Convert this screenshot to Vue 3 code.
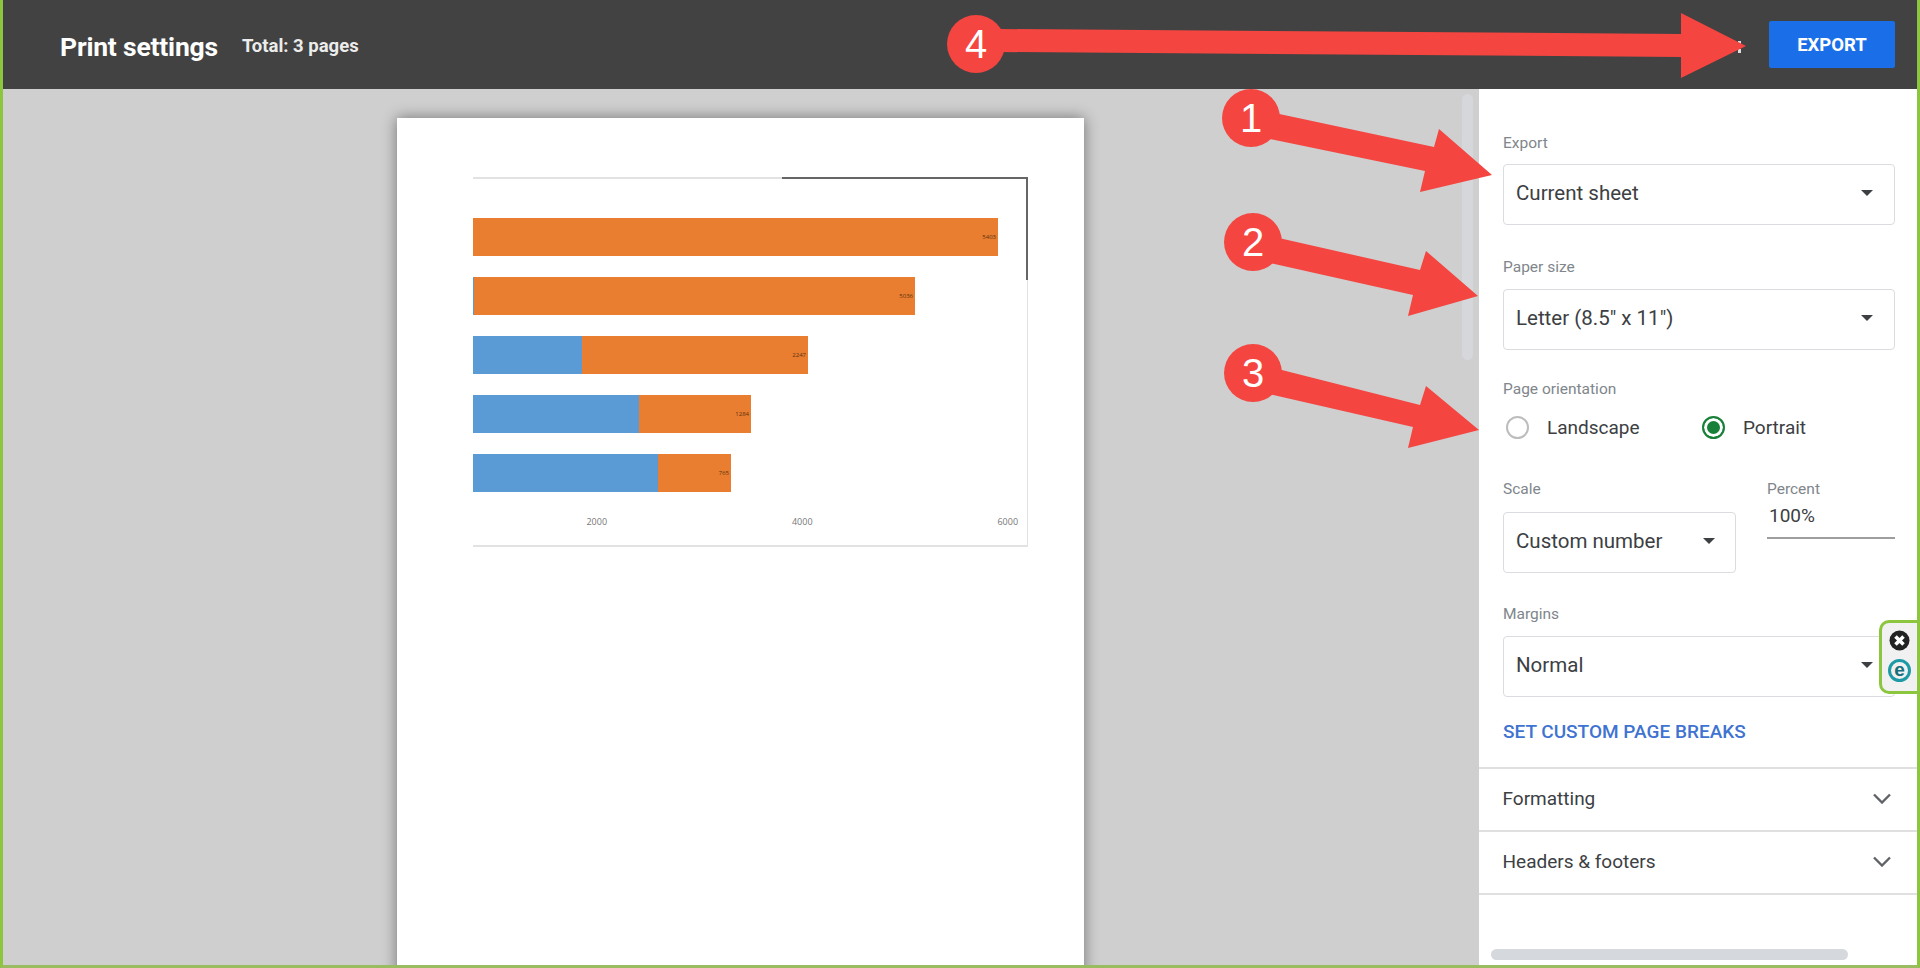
<template>
  <div class="page">
    <!-- 상단 바 -->
    <header class="topbar">
      <h1 class="title">Print settings</h1>
      <span class="total">Total: 3 pages</span>
      <span class="menu-dot"></span>
      <button class="export-btn">EXPORT</button>
    </header>

    <div class="main">
      <!-- 미리보기 -->
      <section class="preview">
        <div class="paper">
          <div class="chart">
            <div class="chart-line-top"></div>
            <div class="chart-line-right"></div>
            <div class="bars">
              <div v-for="bar in bars" :key="bar.label" class="bar">
                <div class="bar-blue" :style="{ width: bar.blue + 'px' }"></div>
                <div class="bar-orange" :style="{ width: bar.orange + 'px' }">
                  <span class="bar-label">{{ bar.label }}</span>
                </div>
              </div>
            </div>
            <div class="axis">
              <span v-for="tick in ticks" :key="tick">{{ tick }}</span>
            </div>
          </div>
        </div>
        <div class="preview-scroll"></div>
      </section>

      <!-- 오른쪽 설정 -->
      <aside class="sidebar">
        <div class="settings">
          <label class="field-label first">Export</label>
          <div class="select">
            <span>Current sheet</span>
            <svg class="caret" width="12" height="6" viewBox="0 0 12 6"><path d="M0 0h12L6 6z" /></svg>
          </div>

          <label class="field-label paper-label">Paper size</label>
          <div class="select">
            <span>Letter (8.5" x 11")</span>
            <svg class="caret" width="12" height="6" viewBox="0 0 12 6"><path d="M0 0h12L6 6z" /></svg>
          </div>

          <label class="field-label orient-label">Page orientation</label>
          <div class="radio-group">
            <div class="radio-item landscape">
              <span class="radio"></span>
              <span>Landscape</span>
            </div>
            <div class="radio-item">
              <span class="radio checked"></span>
              <span>Portrait</span>
            </div>
          </div>

          <div class="scale-row">
            <div class="scale-col">
              <label class="field-label">Scale</label>
              <div class="select">
                <span>Custom number</span>
                <svg class="caret" width="12" height="6" viewBox="0 0 12 6"><path d="M0 0h12L6 6z" /></svg>
              </div>
            </div>
            <div class="percent-col">
              <label class="field-label">Percent</label>
              <div class="percent-input">100%</div>
            </div>
          </div>

          <label class="field-label margin-label">Margins</label>
          <div class="select">
            <span>Normal</span>
            <svg class="caret" width="12" height="6" viewBox="0 0 12 6"><path d="M0 0h12L6 6z" /></svg>
          </div>

          <a class="breaks-link">SET CUSTOM PAGE BREAKS</a>
        </div>

        <div v-for="name in sections" :key="name" class="section-row">
          <span>{{ name }}</span>
          <svg width="18" height="11" viewBox="0 0 18 11" fill="none" stroke="#5f6368" stroke-width="2.4">
            <path d="M1 1.5l8 8 8-8" />
          </svg>
        </div>

        <div class="side-scroll"></div>

        <!-- 확장 프로그램 위젯 -->
        <div class="ext-widget">
          <svg width="21" height="21" viewBox="0 0 21 21">
            <circle cx="10.5" cy="10.5" r="10" fill="#222" />
            <path d="M6.5 6.5l8 8M14.5 6.5l-8 8" stroke="#fff" stroke-width="3.6" />
          </svg>
          <span class="ext-e">e</span>
        </div>
      </aside>
    </div>

    <!-- 빨간 화살표 주석 -->
    <svg class="notes" width="1920" height="968" viewBox="0 0 1920 968">
      <g v-for="note in notes" :key="note.num">
        <polygon :points="note.shape" fill="#f44540" />
        <circle :cx="note.x" :cy="note.y" r="29" fill="#f44540" />
        <text :x="note.x" :y="note.y + 14" class="note-num" text-anchor="middle">{{ note.num }}</text>
      </g>
    </svg>
  </div>
</template>

<script setup>
// 차트 막대 데이터 (px)
const bars = [
  { blue: 0, orange: 525, label: '5403' },
  { blue: 1, orange: 441, label: '5036' },
  { blue: 109, orange: 226, label: '2247' },
  { blue: 166, orange: 112, label: '1284' },
  { blue: 185, orange: 73, label: '765' },
];
const ticks = ['2000', '4000', '6000'];
const sections = ['Formatting', 'Headers & footers'];

// 주석 번호 + 화살표 모양
const notes = [
  {
    num: 1,
    x: 1251,
    y: 118,
    shape: '1270,112 1434,147 1439,129 1492,175 1420,192 1425,171 1265,138',
  },
  {
    num: 2,
    x: 1253,
    y: 242,
    shape: '1270,236 1420,270 1426,251 1478,296 1408,316 1413,295 1265,262',
  },
  {
    num: 3,
    x: 1253,
    y: 373,
    shape: '1270,367 1420,405 1426,386 1479,430 1408,448 1413,427 1265,393',
  },
  {
    num: 4,
    x: 976,
    y: 44,
    shape: '1000,29 1681,34 1681,13 1746,46 1681,78 1681,57 1000,52',
  },
];
</script>

<style>
html,
body {
  margin: 0;
  background: #cfcfcf;
}
</style>

<style scoped>
.page {
  position: relative;
  box-sizing: border-box;
  width: 1920px;
  height: 968px;
  overflow: hidden;
  display: flex;
  flex-direction: column;
  border-left: 3px solid #8cc63f;
  border-right: 3px solid #8cc63f;
  border-bottom: 3px solid #98bc5f;
  font-family: Roboto, "Liberation Sans", sans-serif;
  color: #3c4043;
}

/* 상단 바 */
.topbar {
  flex: none;
  box-sizing: border-box;
  height: 89px;
  display: flex;
  align-items: center;
  padding: 3px 22px 0 57px;
  background: #424242;
  color: #fff;
}
.title {
  margin: 0;
  font-size: 26.5px;
  font-weight: 700;
  letter-spacing: -0.2px;
}
.total {
  margin-left: 24px;
  font-size: 18.5px;
  font-weight: 700;
  color: #ececec;
}
.menu-dot {
  margin-left: auto;
  width: 0;
  height: 12px;
  margin-top: 1px;
  border-left: 3px dotted #ddd;
}
.export-btn {
  margin-left: 28px;
  margin-top: -3px;
  width: 126px;
  height: 47px;
  border: none;
  border-radius: 2px;
  background: #1a6fe8;
  color: #fff;
  font-family: inherit;
  font-size: 18.5px;
  font-weight: 700;
}

.main {
  flex: 1;
  min-height: 0;
  display: flex;
}

/* 미리보기 */
.preview {
  position: relative;
  flex: 1;
  background: #cfcfcf;
  overflow: hidden;
}
.preview-scroll {
  position: absolute;
  top: 5px;
  right: 6px;
  width: 11px;
  height: 266px;
  border-radius: 6px;
  background: #d6d7db;
}
.paper {
  box-sizing: border-box;
  width: 687px;
  height: 900px;
  margin: 29px 0 0 394px;
  padding-top: 59px;
  padding-left: 76px;
  background: #fff;
  box-shadow: 0 0 14px rgba(0, 0, 0, 0.45);
}
.chart {
  position: relative;
  box-sizing: border-box;
  width: 555px;
  height: 370px;
  padding-top: 39px;
  border-top: 2px solid #e2e2e2;
  border-right: 1px solid #e2e2e2;
  border-bottom: 2px solid #e2e2e2;
}
.chart-line-top {
  position: absolute;
  top: -2px;
  right: -1px;
  width: 246px;
  height: 2px;
  background: #666;
}
.chart-line-right {
  position: absolute;
  top: -2px;
  right: -1px;
  width: 2px;
  height: 103px;
  background: #666;
}
.bars {
  display: flex;
  flex-direction: column;
  gap: 21px;
}
.bar {
  display: flex;
  height: 38px;
}
.bar-blue {
  background: #5b9bd5;
}
.bar-orange {
  display: flex;
  align-items: center;
  justify-content: flex-end;
  padding-right: 2px;
  box-sizing: border-box;
  background: #e97e30;
}
.bar-label {
  font-family: "Open Sans", sans-serif;
  font-size: 6px;
  color: #5b3212;
}
.axis {
  display: flex;
  margin-top: 23px;
  margin-left: 21px;
  font-family: "Open Sans", sans-serif;
  font-size: 9px;
  color: #777;
}
.axis span {
  flex: none;
  width: 205.5px;
  text-align: center;
}

/* 오른쪽 설정 */
.sidebar {
  position: relative;
  flex: none;
  width: 438px;
  background: #fff;
}
.settings {
  box-sizing: border-box;
  height: 678px;
  padding: 44px 22px 0 24px;
}
.field-label {
  display: block;
  height: 20px;
  line-height: 20px;
  margin-bottom: 11px;
  font-size: 15.5px;
  color: #80868b;
}
.paper-label {
  margin-top: 32px;
  margin-bottom: 12px;
}
.orient-label {
  margin-top: 29px;
  margin-bottom: 0;
}
.margin-label {
  margin-top: 31px;
  margin-bottom: 12px;
}
.select {
  box-sizing: border-box;
  height: 61px;
  display: flex;
  align-items: center;
  justify-content: space-between;
  padding: 0 21px 3px 12px;
  border: 1px solid #dadce0;
  border-radius: 4px;
  font-size: 20.5px;
  color: #3c4043;
}
.scale-col .select {
  padding-right: 20px;
}
.caret {
  fill: #3c4043;
}
.radio-group {
  display: flex;
  align-items: center;
  height: 40px;
  margin-top: 8px;
  font-size: 19px;
}
.radio-item {
  display: flex;
  align-items: center;
  gap: 18px;
}
.landscape {
  width: 196px;
  padding-left: 3px;
}
.radio {
  box-sizing: border-box;
  width: 23px;
  height: 23px;
  border: 2.5px solid #bdbdbd;
  border-radius: 50%;
}
.radio.checked {
  border-color: #188038;
  background: #188038;
  box-shadow: inset 0 0 0 3px #fff;
}
.scale-row {
  display: flex;
  gap: 31px;
  margin-top: 32px;
}
.scale-col {
  width: 233px;
}
.scale-col .field-label {
  margin-bottom: 13px;
}
.percent-col {
  flex: 1;
}
.percent-col .field-label {
  margin-bottom: 0;
}
.percent-input {
  box-sizing: border-box;
  height: 40px;
  padding: 5px 0 0 2px;
  border-bottom: 2px solid #9e9e9e;
  font-size: 19px;
}
.breaks-link {
  display: block;
  margin-top: 23px;
  font-size: 19px;
  font-weight: 500;
  color: #3f73d1;
}
.section-row {
  box-sizing: border-box;
  height: 63px;
  display: flex;
  align-items: center;
  justify-content: space-between;
  padding: 0 26px 3px 23.5px;
  border-top: 2px solid #e0e0e0;
  font-size: 19px;
  color: #3c4043;
}
.section-row + .section-row {
  border-bottom: 2px solid #e0e0e0;
  height: 65px;
}
.side-scroll {
  position: absolute;
  left: 12px;
  bottom: 5px;
  width: 357px;
  height: 11px;
  border-radius: 6px;
  background: #d5d8dc;
}

/* 확장 프로그램 위젯 */
.ext-widget {
  position: absolute;
  top: 531px;
  right: 0;
  box-sizing: border-box;
  width: 38px;
  height: 74px;
  display: flex;
  flex-direction: column;
  align-items: center;
  gap: 8px;
  padding-top: 7px;
  border: 3px solid #8cc63f;
  border-right: none;
  border-radius: 10px 0 0 10px;
  background: #f1f1f1;
}
.ext-e {
  box-sizing: border-box;
  width: 23px;
  height: 23px;
  line-height: 16px;
  text-align: center;
  border: 3px solid #1d9aa5;
  border-radius: 50%;
  font-family: "Liberation Sans", sans-serif;
  font-size: 19px;
  font-weight: 700;
  color: #14707a;
}

/* 주석 */
.notes {
  position: absolute;
  top: 0;
  left: -3px;
  pointer-events: none;
}
.note-num {
  font-family: "Liberation Sans", sans-serif;
  font-size: 40px;
  fill: #fff;
}
</style>
